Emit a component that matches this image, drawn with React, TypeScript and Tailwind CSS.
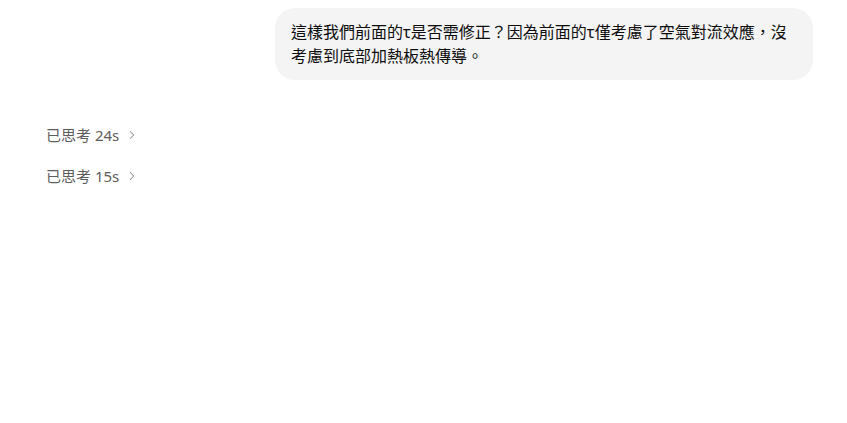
import { ChevronRight } from "lucide-react";

const font = { fontFamily: '"Segoe UI", "Noto Sans", "Noto Sans CJK TC", sans-serif' };

function Thought({ secs }: { secs: string }) {
  return (
    <button type="button" className="flex items-center gap-1.5 text-[15px] leading-6 text-[#5d5d5d]">
      <span>已思考 {secs}</span>
      <ChevronRight className="h-3.5 w-3.5 text-[#8f8f8f]" strokeWidth={1.8} />
    </button>
  );
}

export default function App() {
  return (
    <div className="min-h-[423px] w-full bg-white pl-[46px] pr-[34px] pt-2" style={font}>
      <div className="flex justify-end">
        <div className="w-[538px] rounded-[20px] bg-[#f4f4f4] px-4 py-3 text-[16px] leading-6 text-[#0d0d0d]">
          這樣我們前面的τ是否需修正？因為前面的τ僅考慮了空氣對流效應，沒考慮到底部加熱板熱傳導。
        </div>
      </div>
      <div className="mt-[43px] flex flex-col gap-[17px]">
        <Thought secs="24s" />
        <Thought secs="15s" />
      </div>
    </div>
  );
}
